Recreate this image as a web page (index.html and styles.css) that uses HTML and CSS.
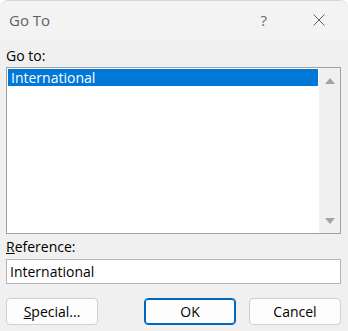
FILE: index.html
```html
<!DOCTYPE html>
<html lang="en">
<head>
    <meta charset="UTF-8">
    <title>Go To</title>
    <link rel="stylesheet" href="styles.css">
</head>
<body>
    <div class="dialog">
        <div class="titlebar">
            <span class="title">Go To</span>
            <span class="help">?</span>
            <span class="close">
                <svg width="12" height="12" viewBox="0 0 12 12">
                    <path d="M0.5 0.5 L11.5 11.5 M11.5 0.5 L0.5 11.5" stroke="#5f5f5f" stroke-width="1" fill="none"/>
                </svg>
            </span>
        </div>
        <div class="content">
            <div class="label">Go to:</div>
            <div class="listbox">
                <div class="items">
                    <div class="item selected">International</div>
                </div>
                <div class="scrollbar">
                    <span class="arrow up"></span>
                    <span class="arrow down"></span>
                </div>
            </div>
            <div class="label ref-label"><u>R</u>eference:</div>
            <div class="textbox">International</div>
            <div class="buttons">
                <button class="btn"><u>S</u>pecial...</button>
                <div class="right-buttons">
                    <button class="btn default">OK</button>
                    <button class="btn">Cancel</button>
                </div>
            </div>
        </div>
    </div>
</body>
</html>
```

FILE: styles.css
```css
html, body {
    margin: 0;
    padding: 0;
    background: #ffffff;
}

body {
    font-family: 'Open Sans', 'Noto Sans', sans-serif;
    font-size: 14px;
    color: #000;
}

.dialog {
    width: 348px;
    height: 331px;
    background: #f0f0f0;
    border-radius: 8px 8px 0 0;
    overflow: hidden;
    box-sizing: border-box;
    border-top: 1px solid #d8d8d8;
}

.titlebar {
    height: 38px;
    background: #f3f3f3;
    display: flex;
    align-items: center;
    position: relative;
}

.title {
    margin-left: 9px;
    font-size: 15px;
    color: #5f5f5f;
}

.help {
    margin-left: auto;
    margin-right: 46px;
    font-size: 15px;
    color: #6a6a6a;
}

.close {
    display: flex;
    margin-right: 23px;
}

.content {
    padding: 6px 7px 0 6px;
}

.label {
    height: 22px;
    line-height: 22px;
}

.listbox {
    height: 165px;
    border: 1px solid #a0a0a0;
    background: #fff;
    display: flex;
}

.items {
    flex: 1;
    padding: 1px 1px 0 1px;
}

.item {
    height: 17px;
    line-height: 17px;
    padding-left: 3px;
}

.item.selected {
    background: #0078d7;
    color: #fff;
}

.scrollbar {
    width: 21px;
    background: #f0f0f0;
    display: flex;
    flex-direction: column;
    justify-content: space-between;
    align-items: center;
    padding: 10px 0 9px;
    box-sizing: border-box;
}

.arrow {
    width: 0;
    height: 0;
    border-left: 5px solid transparent;
    border-right: 5px solid transparent;
}

.arrow.up {
    border-bottom: 6px solid #a3a3a3;
}

.arrow.down {
    border-top: 6px solid #a3a3a3;
}

.ref-label {
    margin-top: 2px;
}

.textbox {
    height: 23px;
    line-height: 23px;
    border: 1px solid #b5b5b5;
    background: #fff;
    padding-left: 3px;
    margin-top: 1px;
}

.buttons {
    display: flex;
    justify-content: space-between;
    margin-top: 14px;
}

.right-buttons {
    display: flex;
    gap: 13px;
}

.btn {
    width: 92px;
    height: 27px;
    font-family: inherit;
    font-size: 14px;
    background: #fdfdfd;
    border: 1px solid #d0d0d0;
    border-radius: 4px;
    padding: 0;
    color: #000;
}

.btn.default {
    border: 1px solid #0067c0;
    box-shadow: inset 0 0 0 1px #0067c0;
}
```
